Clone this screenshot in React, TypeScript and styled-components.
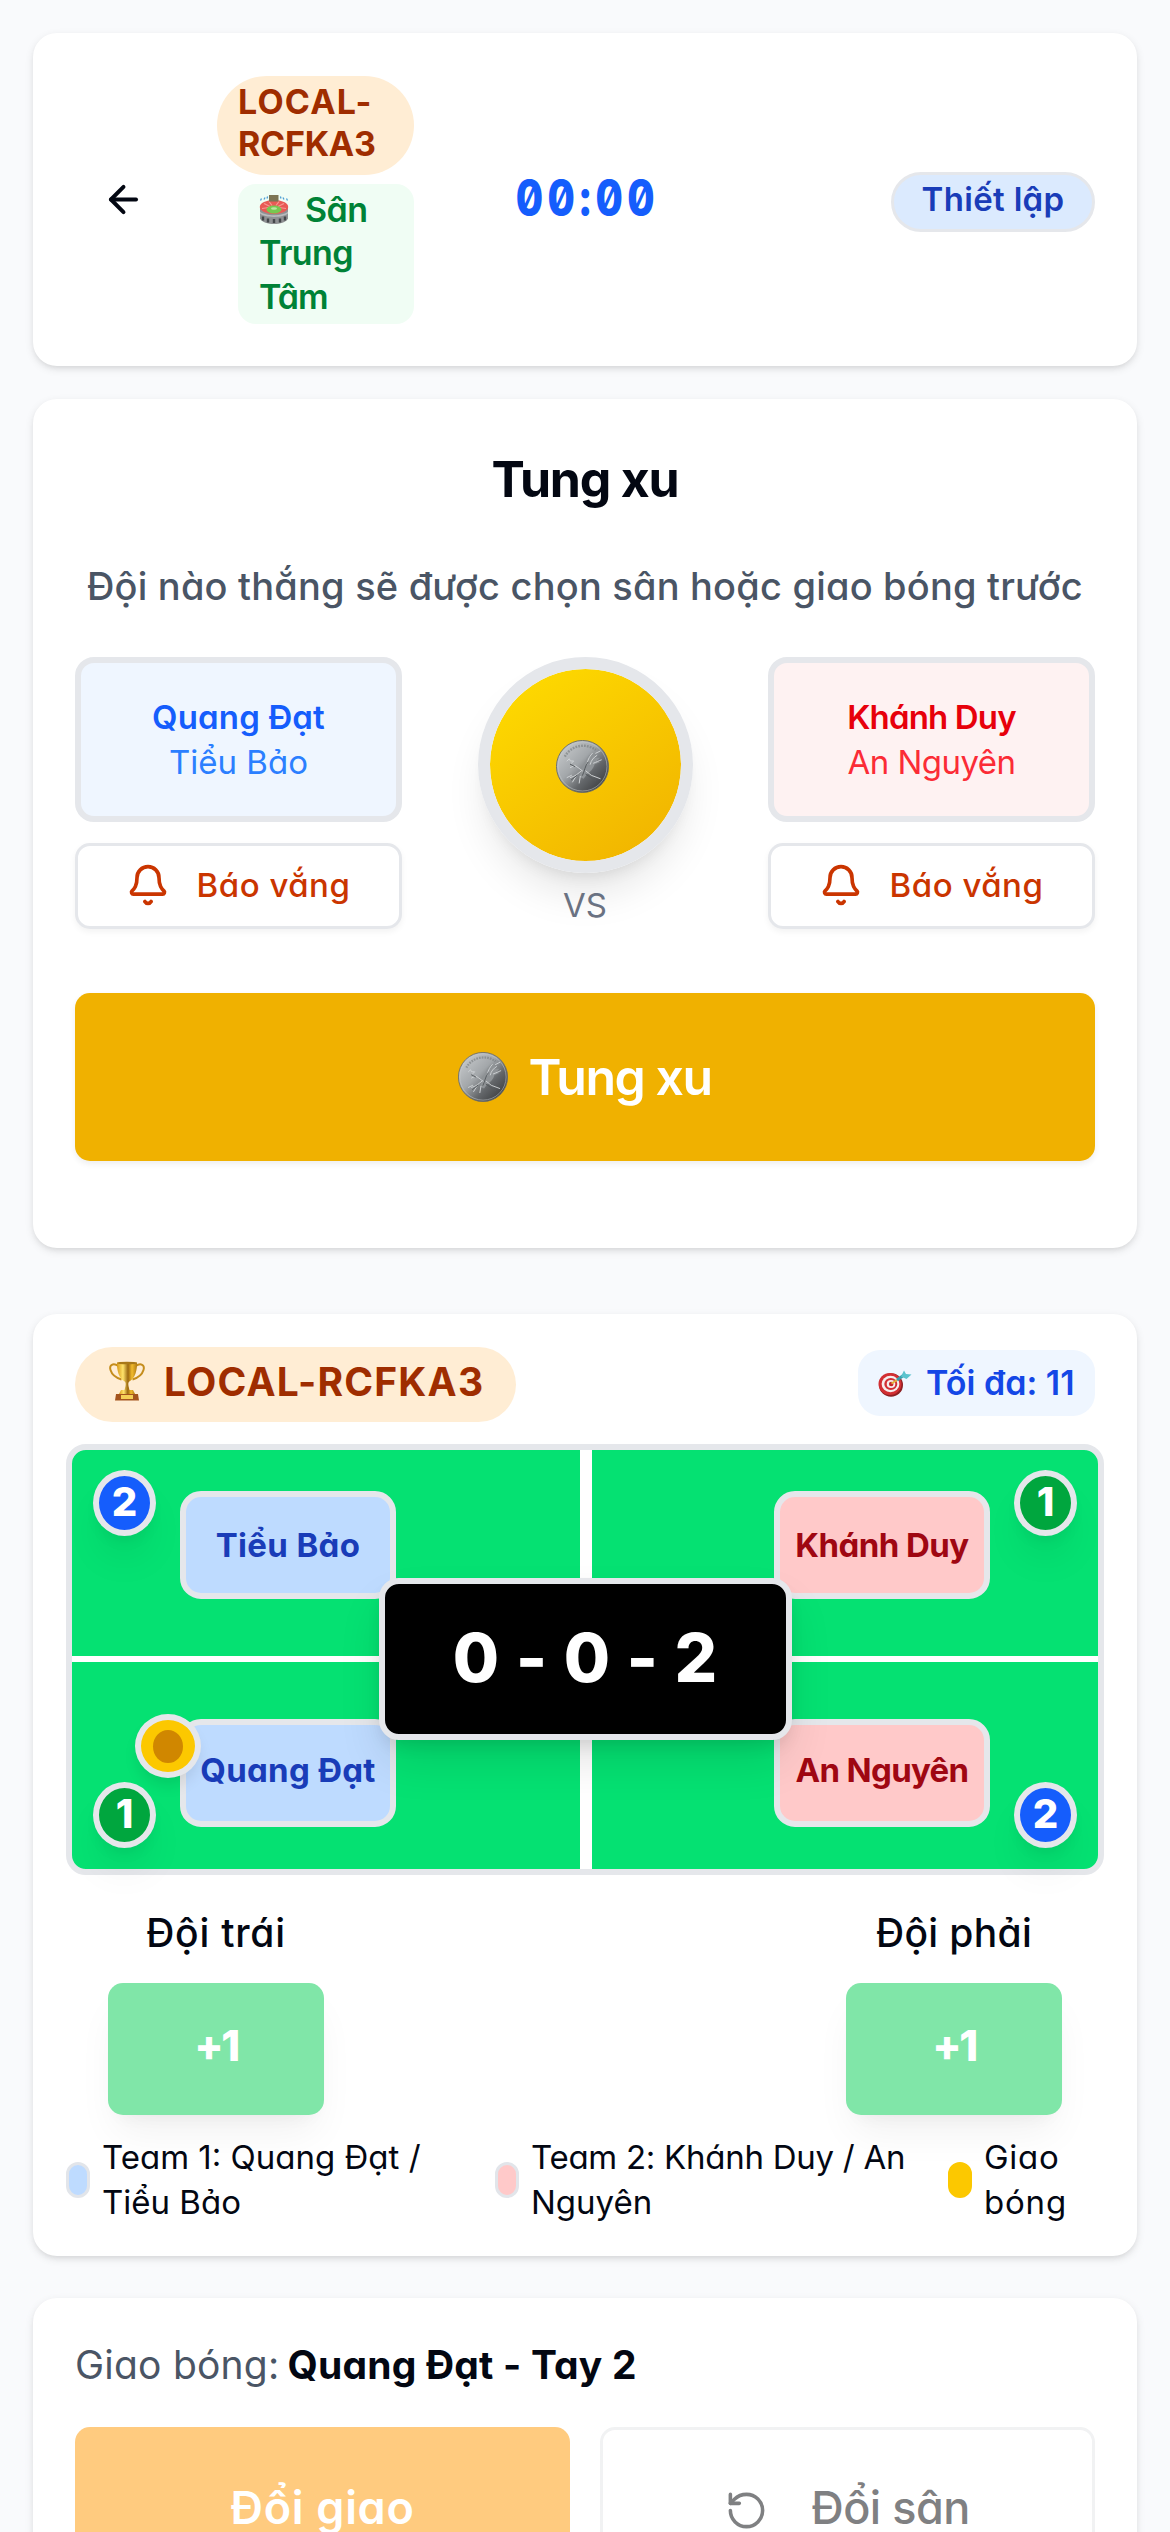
import React from 'react';
import styled, { createGlobalStyle } from 'styled-components';
import { ArrowLeft, Bell, RotateCcw } from 'lucide-react';

const GlobalStyle = createGlobalStyle`
  * { box-sizing: border-box; }
  html, body { margin: 0; background: #f9fafc; }
  body {
    height: 2532px;
    overflow: hidden;
    font-family: Inter, "Noto Sans", sans-serif;
    font-feature-settings: 'cv11';
    color: #030712;
  }
  button { font: inherit; font-feature-settings: inherit; color: inherit; padding: 0; border: 0; background: none; }
`;

const Page = styled.main`
  width: 1170px;
  height: 2532px;
  padding: 33px;
  overflow: hidden;
`;

const Card = styled.section`
  background: #fff;
  border-radius: 24px;
  box-shadow: 0 3px 9px rgba(0, 0, 0, 0.1), 0 3px 6px -3px rgba(0, 0, 0, 0.1);
`;

const Label = styled.span<{ $size: number; $weight?: number; $color?: string; $spacing?: number; $line?: number }>`
  display: block;
  white-space: nowrap;
  font-size: ${p => p.$size}px;
  font-weight: ${p => p.$weight ?? 400};
  color: ${p => p.$color ?? 'inherit'};
  letter-spacing: ${p => p.$spacing ?? 0}px;
  line-height: ${p => p.$line ?? 45}px;
`;

/* Header */
const HeaderCard = styled(Card)`
  height: 333px;
  padding: 42px;
  display: grid;
  grid-template-columns: 1fr auto 1fr;
  align-items: center;
`;
const HeaderLeft = styled.div`
  display: flex;
  align-items: center;
  gap: 45px;
`;
const BackButton = styled.button`
  width: 97px;
  height: 84px;
  display: grid;
  place-items: center;
`;
const TagColumn = styled.div`
  width: 197px;
  display: flex;
  flex-direction: column;
  gap: 9px;
`;
const CodePill = styled.div`
  height: 99px;
  padding: 5px 22px 10px 21px;
  border-radius: 50px;
  background: #ffedd4;
`;
const CourtTag = styled.div`
  height: 140px;
  margin-left: 21px;
  padding: 4px 21px;
  border-radius: 18px;
  background: #f0fdf4;
`;
const InlineIconLine = styled.div`
  display: flex;
  align-items: center;
  gap: 16px;
`;
const Timer = styled.div`
  margin-bottom: 3px;
  font-size: 51px;
  line-height: 60px;
  font-weight: 800;
  color: #155dfc;
  letter-spacing: 5.5px;
  margin-right: -5px;
  font-feature-settings: 'zero', 'tnum';
  transform: scaleX(0.83);
`;
const StatusPill = styled.div`
  justify-self: end;
  width: 204px;
  height: 60px;
  margin-top: 4px;
  border: 3px solid #e5e7eb;
  border-radius: 30px;
  background: #dbeafe;
  display: grid;
  place-items: center;
  padding-bottom: 5px;
`;

/* Coin toss */
const TossCard = styled(Card)`
  height: 849px;
  margin-top: 33px;
  padding: 42px;
  text-align: center;
`;
const Subtitle = styled.div`
  margin-top: 46px;
  display: flex;
  justify-content: center;
`;
const TossRow = styled.div`
  margin-top: 48px;
  display: grid;
  grid-template-columns: 327px 1fr 327px;
`;
const TeamColumn = styled.div`
  display: flex;
  flex-direction: column;
  gap: 21px;
`;
const TeamBox = styled.div<{ $bg: string }>`
  height: 165px;
  padding-top: 32px;
  border: 6px solid #e5e7eb;
  border-radius: 19px;
  background: ${p => p.$bg};
`;
const AbsentButton = styled.button`
  height: 86px;
  border: 3px solid #e5e7eb;
  border-radius: 15px;
  background: #fff;
  color: #ca3500;
  box-shadow: 0 3px 6px rgba(0, 0, 0, 0.05);
  display: flex;
  align-items: center;
  justify-content: center;
  gap: 27px;
  padding: 0 1px 2px 0;
`;
const CoinColumn = styled.div`
  display: flex;
  flex-direction: column;
  align-items: center;
`;
const CoinDisc = styled.div`
  width: 215px;
  height: 216px;
  border: 12px solid #e5e7eb;
  border-radius: 50%;
  background: linear-gradient(145deg, #ffdd00, #f0b100) padding-box;
  box-shadow: 0 27px 42px -8px rgba(0, 0, 0, 0.1), 0 12px 18px -12px rgba(0, 0, 0, 0.12);
  display: grid;
  place-items: center;
  padding: 2px 6px 0 0;
`;
const TossButton = styled.button`
  width: 100%;
  height: 168px;
  margin-top: 56px;
  border-radius: 15px;
  background: #f0b100;
  box-shadow: 0 3px 6px rgba(0, 0, 0, 0.07);
  display: flex;
  align-items: center;
  justify-content: center;
  gap: 20px;
`;

/* Score board */
const BoardCard = styled(Card)`
  height: 942px;
  margin-top: 66px;
  padding: 33px;
`;
const BoardHeader = styled.div`
  display: flex;
  align-items: center;
  justify-content: space-between;
  padding: 0 9px;
`;
const MatchPill = styled.div`
  width: 441px;
  height: 75px;
  padding: 0 0 7px 33px;
  border-radius: 38px;
  background: #ffedd4;
  display: flex;
  align-items: center;
  gap: 18px;
`;
const MaxTag = styled.div`
  width: 237px;
  height: 66px;
  margin-bottom: 4px;
  padding-left: 20px;
  border-radius: 22px;
  background: #eff6ff;
  display: flex;
  align-items: center;
  gap: 14px;
`;
const Court = styled.div`
  position: relative;
  height: 431px;
  margin-top: 22px;
  border: 6px solid #e5e7eb;
  border-radius: 20px;
  background: #05e172;
`;
const NetLine = styled.div`
  position: absolute;
  top: 0;
  bottom: 0;
  left: 508px;
  width: 12px;
  background: #fff;
`;
const CenterLine = styled.div`
  position: absolute;
  left: 0;
  right: 0;
  top: 206px;
  height: 6px;
  background: #fff;
`;
const PlayerBox = styled.div<{ $side: 'left' | 'right'; $row: 'top' | 'bottom' }>`
  position: absolute;
  ${p => p.$side}: 108px;
  top: ${p => (p.$row === 'top' ? 41 : 269)}px;
  width: 216px;
  height: 108px;
  padding-bottom: ${p => (p.$row === 'top' ? 0 : 6)}px;
  border: 6px solid #e5e7eb;
  border-radius: 21px;
  background: ${p => (p.$side === 'left' ? '#bedbff' : '#ffc9c9')};
  display: grid;
  place-items: center;
`;
const HandBadge = styled.div<{ $side: 'left' | 'right'; $row: 'top' | 'bottom'; $bg: string }>`
  position: absolute;
  ${p => p.$side}: 21px;
  top: ${p => (p.$row === 'top' ? 20 : 332)}px;
  width: 63px;
  height: 66px;
  padding-bottom: 3px;
  border: 6px solid #e5e7eb;
  border-radius: 50%;
  background: ${p => p.$bg};
  box-shadow: 0 27px 42px -8px rgba(0, 0, 0, 0.08), 0 9px 15px -6px rgba(0, 0, 0, 0.08);
  display: grid;
  place-items: center;
`;
const ServeMarker = styled.div`
  position: absolute;
  left: 63px;
  top: 264px;
  width: 66px;
  height: 64px;
  border: 6px solid #e5e7eb;
  border-radius: 50%;
  background: #fcc800;
  box-shadow: 0 10px 15px -3px rgba(0, 0, 0, 0.1);
  display: grid;
  place-items: center;
`;
const ServeDot = styled.div`
  width: 30px;
  height: 33px;
  border-radius: 50%;
  background: #d08700;
`;
const ScoreBox = styled.div`
  position: absolute;
  left: 307px;
  top: 128px;
  width: 413px;
  height: 162px;
  padding-bottom: 2px;
  border: 6px solid #e5e7eb;
  border-radius: 20px;
  background: #000;
  box-shadow: 0 24px 48px -6px rgba(0, 0, 0, 0.12), 0 9px 18px -6px rgba(0, 0, 0, 0.12);
  display: grid;
  place-items: center;
`;
const PointRow = styled.div`
  margin-top: 31px;
  padding: 0 42px;
  display: flex;
  justify-content: space-between;
`;
const PointColumn = styled.div`
  width: 216px;
  display: flex;
  flex-direction: column;
  align-items: center;
  gap: 23px;
`;
const PointButton = styled.button`
  width: 216px;
  height: 132px;
  padding-bottom: 7px;
  border-radius: 15px;
  background: #80e6a8;
  box-shadow: 0 24px 42px -8px rgba(0, 0, 0, 0.06), 0 12px 18px -12px rgba(0, 0, 0, 0.06);
  display: grid;
  place-items: center;
`;
const Legend = styled.div`
  margin-top: 20px;
  display: grid;
  grid-template-columns: 429px 453px 1fr;
`;
const LegendItem = styled.div`
  display: flex;
  align-items: center;
  gap: 12px;
`;
const Swatch = styled.span<{ $bg: string; $outlined?: boolean }>`
  width: 24px;
  height: 36px;
  border: 3px solid ${p => (p.$outlined ? '#e2e5ea' : p.$bg)};
  border-radius: 12px;
  background: ${p => p.$bg};
`;

/* Serve controls */
const ServeCard = styled(Card)`
  height: 400px;
  margin-top: 42px;
  padding: 42px;
`;
const ServeLine = styled.div`
  display: flex;
  gap: 8px;
`;
const ServeActions = styled.div`
  margin-top: 38px;
  display: grid;
  grid-template-columns: 495px 495px;
  gap: 30px;
`;
const SwapServeButton = styled.button`
  height: 160px;
  border-radius: 15px;
  background: #ffcb7f;
  display: grid;
  place-items: center;
`;
const SwapSideButton = styled.button`
  height: 160px;
  border: 3px solid #f1f2f3;
  border-radius: 15px;
  background: #fff;
  color: #7f8082;
  display: flex;
  align-items: center;
  justify-content: center;
  gap: 43px;

  svg { margin-top: 6px; }
`;

function CoinIcon({ size, id }: { size: number; id: string }) {
  return (
    <svg width={size} height={size} viewBox="0 0 48 48">
      <defs>
        <linearGradient id={id} x1="0.1" y1="0.15" x2="0.85" y2="0.9">
          <stop offset="0" stopColor="#c3c6c8" />
          <stop offset="0.4" stopColor="#a3a7aa" />
          <stop offset="0.7" stopColor="#636669" />
          <stop offset="1" stopColor="#3f4143" />
        </linearGradient>
      </defs>
      <circle cx="24" cy="24" r="23.6" fill={`url(#${id})`} stroke="#65696c" strokeWidth="0.8" />
      <circle cx="24" cy="24" r="22.2" fill="none" stroke="#c6cacc" strokeWidth="0.7" opacity="0.7" />
      <path d="M8 15A19 19 0 0 1 36 9" fill="none" stroke="#74797c" strokeWidth="2.2" strokeDasharray="1.6 1" opacity="0.6" />
      <path d="M21 33c2-4 1-7 4-11 2-4 4-9 8-10 3 0 3 2 2 4l5 0-3 3 3 1-5 2c-1 4-4 7-7 9l-3 4z" fill="#8f9396" />
      <path d="M28 22c1-5 3-8 5-10M31 22c1-4 3-6 6-8M34 21c3-1 4-2 7-3M36 12l4-2M10 19l2-2 1 2 3 0-2 2M13 25l4-2 3 2 4 3M23 28c-3 2-5 5-10 6M14 32l-4 2M18 33l-3 5M22 33l-1 6M27 28l5 4 8 3" fill="none" stroke="#cfd2d4" strokeWidth="0.9" strokeLinecap="round" />
      <path d="M24 32c2-4 2-8 5-12M14 36l5-4M27 31l9 6M13 22l4 2" fill="none" stroke="#55595c" strokeWidth="0.9" strokeLinecap="round" />
    </svg>
  );
}

function StadiumIcon() {
  return (
    <svg width="30" height="31" viewBox="0 0 30 30">
      <path d="M1 13v11c2 4 8 5.500 14 5.500s12-1.500 14-5.500V13z" fill="#8f9193" />
      <path d="M1 17c5 5 23 5 28 0v2c-5 4.500-23 4.500-28 0z" fill="#b9bbbd" />
      <path d="M4 22v4M9 24v4M15 24.500v4M21 24v4M26 22v4" stroke="#45484b" strokeWidth="2.400" />
      <ellipse cx="15" cy="12.500" rx="14.200" ry="7" fill="#e95a55" />
      <path d="M5 9l6 3M10 7l3 4M25 9l-6 3M20 7l-3 4M3 14l7-1M27 14l-7-1" stroke="#f69a93" strokeWidth="1.200" />
      <ellipse cx="15" cy="15" rx="7.500" ry="4" fill="#77c850" />
      <ellipse cx="15" cy="14" rx="3" ry="1.300" fill="#b8e8a0" />
      <rect x="10" y="0.500" width="9.500" height="6.500" fill="#7d7554" />
      <path d="M1.500 6l1-2M5 5l1-2M8 4l.6-2M28.500 6l-1-2M25 5l-1-2M22 4l-.6-2" stroke="#4e9ed4" strokeWidth="1.300" />
    </svg>
  );
}

function TrophyIcon() {
  return (
    <svg width="38" height="40" viewBox="0 0 38 40">
      <defs>
        <linearGradient id="gold" x1="0" x2="1" y1="0" y2="0">
          <stop offset="0" stopColor="#d79a1a" />
          <stop offset="0.3" stopColor="#ffe36b" />
          <stop offset="0.55" stopColor="#9a6710" />
          <stop offset="0.75" stopColor="#f2bb2c" />
          <stop offset="1" stopColor="#b07a12" />
        </linearGradient>
      </defs>
      <path d="M10.500 5C5 1.500 1 4 2.500 9s6 8 11 9.500M27.500 5C33 1.500 37 4 35.500 9s-6 8-11 9.500" fill="none" stroke="#c58d1c" strokeWidth="2" />
      <path d="M9 1.500h20c.3 8-2 15.500-7 18.500-1.600 1-2 2-1.500 5l1.500 6h-6l1.500-6c.5-3 .1-4-1.500-5C11 17 8.700 9.500 9 1.500z" fill="url(#gold)" />
      <ellipse cx="19" cy="2" rx="10" ry="1.300" fill="#a87818" />
      <path d="M13 29h12l2 4H11z" fill="url(#gold)" />
      <path d="M8 33h22l1 6.500H7z" fill="#a4541d" />
      <rect x="13" y="34" width="12" height="4" fill="#f4cf55" />
    </svg>
  );
}

function TargetIcon() {
  return (
    <svg width="34" height="28" viewBox="0 0 34 28">
      <ellipse cx="13" cy="16" rx="12" ry="11.800" fill="#8e1f22" />
      <ellipse cx="12" cy="15" rx="11.500" ry="11" fill="#d22f33" />
      <ellipse cx="12.500" cy="15" rx="8.900" ry="8.300" fill="#f6eeee" />
      <ellipse cx="12.800" cy="15" rx="6.500" ry="6" fill="#d22f33" />
      <ellipse cx="13" cy="15" rx="4.300" ry="3.900" fill="#f6eeee" />
      <circle cx="13.200" cy="15" r="2.300" fill="#c5262a" />
      <path d="M13.500 14.500L19 11" stroke="#e3b23c" strokeWidth="2" />
      <path d="M19 11l7-5" stroke="#3a9fae" strokeWidth="3" />
      <path d="M23 7.500l3-6 2 3.500 5.500.5-5 4.500z" fill="#59c3ce" />
    </svg>
  );
}

interface TeamProps {
  bg: string;
  first: string;
  firstColor: string;
  firstSpacing: number;
  second: string;
  secondColor: string;
  secondSpacing: number;
}

function Team(p: TeamProps) {
  return (
    <TeamColumn>
      <TeamBox $bg={p.bg}>
        <Label $size={33} $weight={600} $color={p.firstColor} $spacing={p.firstSpacing}>{p.first}</Label>
        <Label $size={33} $color={p.secondColor} $spacing={p.secondSpacing}>{p.second}</Label>
      </TeamBox>
      <AbsentButton>
        <Bell size={44} strokeWidth={2} />
        <Label $size={33} $weight={500} $spacing={0.5}>Báo vắng</Label>
      </AbsentButton>
    </TeamColumn>
  );
}

export default function App() {
  return (
    <>
      <GlobalStyle />
      <Page>
        <HeaderCard>
          <HeaderLeft>
            <BackButton aria-label="Back"><ArrowLeft size={43} strokeWidth={2.2} /></BackButton>
            <TagColumn>
              <CodePill>
                <Label $size={34} $weight={700} $color="#9f2d00" $spacing={1.2} $line={42}>LOCAL-</Label>
                <Label $size={34} $weight={700} $color="#9f2d00" $spacing={-0.26} $line={42}>RCFKA3</Label>
              </CodePill>
              <CourtTag>
                <InlineIconLine>
                  <StadiumIcon />
                  <Label $size={34} $weight={600} $color="#008236" $spacing={-0.6} $line={43}>Sân</Label>
                </InlineIconLine>
                <Label $size={34} $weight={600} $color="#008236" $spacing={-0.6} $line={43}>Trung</Label>
                <Label $size={34} $weight={600} $color="#008236" $spacing={-1} $line={45}>Tâm</Label>
              </CourtTag>
            </TagColumn>
          </HeaderLeft>
          <Timer>00:00</Timer>
          <StatusPill>
            <Label $size={33} $weight={600} $color="#193cb8" $spacing={0.33}>Thiết lập</Label>
          </StatusPill>
        </HeaderCard>

        <TossCard>
          <Label $size={50} $weight={700} $spacing={-1.2} $line={77}>Tung xu</Label>
          <Subtitle>
            <Label $size={38} $weight={500} $color="#4a5565" $spacing={0.2}>Đội nào thắng sẽ được chọn sân hoặc giao bóng trước</Label>
          </Subtitle>
          <TossRow>
            <Team bg="#eff6ff" first="Quang Đạt" firstColor="#155dfc" firstSpacing={0.14} second="Tiểu Bảo" secondColor="#2b7fff" secondSpacing={0} />
            <CoinColumn>
              <CoinDisc><CoinIcon size={53} id="coinLarge" /></CoinDisc>
              <Label $size={33} $color="#6a7282" $line={64}>VS</Label>
            </CoinColumn>
            <Team bg="#fef2f2" first="Khánh Duy" firstColor="#e7000b" firstSpacing={-0.84} second="An Nguyên" secondColor="#fb2c36" secondSpacing={-0.54} />
          </TossRow>
          <TossButton>
            <CoinIcon size={50} id="coinSmall" />
            <Label $size={50} $weight={600} $color="#fff" $spacing={-1.48} $line={60}>Tung xu</Label>
          </TossButton>
        </TossCard>

        <BoardCard>
          <BoardHeader>
            <MatchPill>
              <TrophyIcon />
              <Label $size={39} $weight={700} $color="#9f2d00" $spacing={1.2}>LOCAL-RCFKA3</Label>
            </MatchPill>
            <MaxTag>
              <TargetIcon />
              <Label $size={34} $weight={600} $color="#1447e6">Tối đa: 11</Label>
            </MaxTag>
          </BoardHeader>

          <Court>
            <NetLine />
            <CenterLine />
            <PlayerBox $side="left" $row="top"><Label $size={33} $weight={700} $color="#193cb8" $spacing={0.34}>Tiểu Bảo</Label></PlayerBox>
            <PlayerBox $side="left" $row="bottom"><Label $size={33} $weight={700} $color="#193cb8" $spacing={0.27}>Quang Đạt</Label></PlayerBox>
            <PlayerBox $side="right" $row="top"><Label $size={33} $weight={700} $color="#9f0712" $spacing={-0.55}>Khánh Duy</Label></PlayerBox>
            <PlayerBox $side="right" $row="bottom"><Label $size={33} $weight={700} $color="#9f0712" $spacing={-0.69}>An Nguyên</Label></PlayerBox>
            <HandBadge $side="left" $row="top" $bg="#155dfc"><Label $size={40} $weight={800} $color="#fff">2</Label></HandBadge>
            <HandBadge $side="left" $row="bottom" $bg="#00a63e"><Label $size={40} $weight={800} $color="#fff">1</Label></HandBadge>
            <HandBadge $side="right" $row="top" $bg="#00a63e"><Label $size={40} $weight={800} $color="#fff">1</Label></HandBadge>
            <HandBadge $side="right" $row="bottom" $bg="#155dfc"><Label $size={40} $weight={800} $color="#fff">2</Label></HandBadge>
            <ServeMarker><ServeDot /></ServeMarker>
            <ScoreBox><Label $size={67} $weight={800} $color="#fff" $spacing={0.9} $line={80}>0 - 0 - 2</Label></ScoreBox>
          </Court>

          <PointRow>
            <PointColumn>
              <Label $size={39} $weight={500} $spacing={0.76} $line={54}>Đội trái</Label>
              <PointButton><Label $size={43} $weight={800} $color="#fff" $spacing={-2.6}>+1</Label></PointButton>
            </PointColumn>
            <PointColumn>
              <Label $size={39} $weight={500} $spacing={0.34} $line={54}>Đội phải</Label>
              <PointButton><Label $size={43} $weight={800} $color="#fff" $spacing={-2.6}>+1</Label></PointButton>
            </PointColumn>
          </PointRow>

          <Legend>
            <LegendItem>
              <Swatch $bg="#bedbff" $outlined />
              <div>
                <Label $size={33}>Team 1: Quang Đạt /</Label>
                <Label $size={33}>Tiểu Bảo</Label>
              </div>
            </LegendItem>
            <LegendItem>
              <Swatch $bg="#ffc9c9" $outlined />
              <div>
                <Label $size={33} $spacing={-0.27}>Team 2: Khánh Duy / An</Label>
                <Label $size={33}>Nguyên</Label>
              </div>
            </LegendItem>
            <LegendItem>
              <Swatch $bg="#fcc800" />
              <div>
                <Label $size={33} $spacing={0.7}>Giao</Label>
                <Label $size={33} $spacing={0.8}>bóng</Label>
              </div>
            </LegendItem>
          </Legend>
        </BoardCard>

        <ServeCard>
          <ServeLine>
            <Label $size={39} $color="#4a5565" $spacing={0.22} $line={49}>Giao bóng:</Label>
            <Label $size={39} $weight={700} $spacing={0.2} $line={49}>Quang Đạt - Tay 2</Label>
          </ServeLine>
          <ServeActions>
            <SwapServeButton>
              <Label $size={45} $weight={600} $color="#fff" $spacing={0.7}>Đổi giao</Label>
            </SwapServeButton>
            <SwapSideButton>
              <RotateCcw size={43} strokeWidth={2} />
              <Label $size={45} $weight={500} $spacing={-0.5}>Đổi sân</Label>
            </SwapSideButton>
          </ServeActions>
        </ServeCard>
      </Page>
    </>
  );
}
